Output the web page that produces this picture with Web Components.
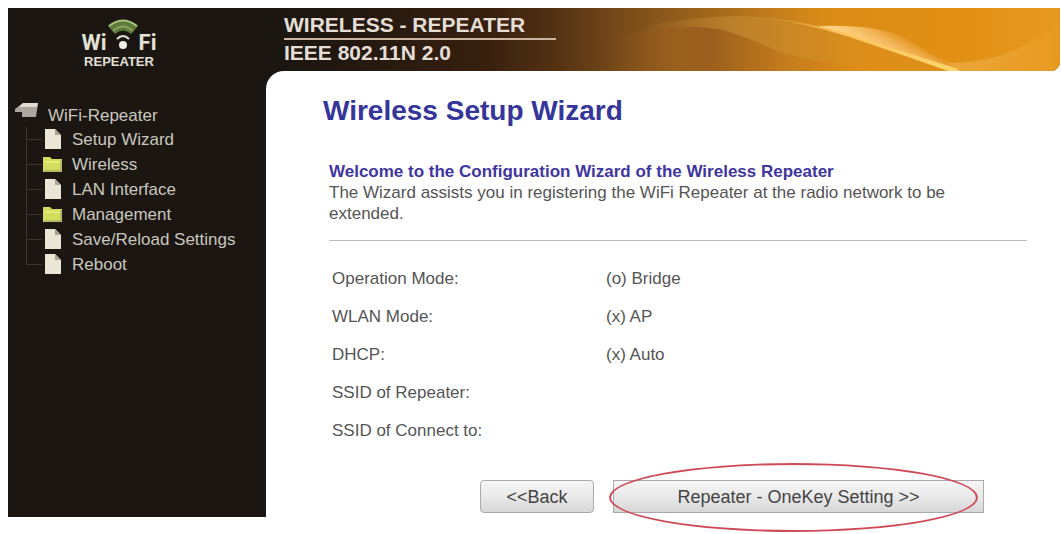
<!DOCTYPE html>
<html lang="en">
<head>
<meta charset="utf-8">
<title>Wireless Setup Wizard</title>
<style>
  body { box-sizing: border-box; min-height: 100vh; margin: 0; padding: 8px 2px 16px 8px; background: #fff; font-family: "Liberation Sans", Arial, sans-serif; font-size: 17px; color: #555; }
</style>
</head>
<body>
<repeater-app>
  <brand-logo slot="logo"></brand-logo>
  <top-banner slot="banner">
    <span slot="name">WIRELESS - REPEATER</span>
    <span slot="standard">IEEE 802.11N 2.0</span>
  </top-banner>
  <nav-tree slot="menu" label="WiFi-Repeater">
    <nav-item kind="page">Setup Wizard</nav-item>
    <nav-item kind="folder">Wireless</nav-item>
    <nav-item kind="page">LAN Interface</nav-item>
    <nav-item kind="folder">Management</nav-item>
    <nav-item kind="page">Save/Reload Settings</nav-item>
    <nav-item kind="page">Reboot</nav-item>
  </nav-tree>
  <setup-wizard>
    <span slot="title">Wireless Setup Wizard</span>
    <span slot="welcome">Welcome to the Configuration Wizard of the Wireless Repeater</span>
    <span slot="intro">The Wizard assists you in registering the WiFi Repeater at the radio network to be extended.</span>
    <status-table></status-table>
    <wizard-button slot="actions">&lt;&lt;Back</wizard-button>
    <wizard-button slot="actions" wide marked>Repeater - OneKey Setting &gt;&gt;</wizard-button>
  </setup-wizard>
</repeater-app>

<script>
const define = (name, html, setup) => {
  const template = document.createElement('template');
  template.innerHTML = html;
  customElements.define(name, class extends HTMLElement {
    constructor() {
      super();
      this.attachShadow({ mode: 'open' }).append(template.content.cloneNode(true));
    }
    connectedCallback() { if (setup) setup(this, this.shadowRoot); }
  });
};

define('repeater-app', `
  <style>
    :host { display: block; }
    .top { position: relative; display: grid; grid-template-columns: 258px 1fr; height: 63px; background: #1b1611; border-bottom-right-radius: 9px; overflow: hidden; }
    .body { display: grid; grid-template-columns: 258px 1fr; background: linear-gradient(90deg, #1b1611 258px, #fff 258px); }
    aside { padding-top: 33px; }
    .corner { background: linear-gradient(#1b1611, #1b1611) 0 0 / 18px 18px no-repeat; }
    main { background: #fff; border-top-left-radius: 18px; }
  </style>
  <header class="top"><slot name="logo"></slot><slot name="banner"></slot></header>
  <div class="body"><aside><slot name="menu"></slot></aside><div class="corner"><main><slot></slot></main></div></div>
`);

define('brand-logo', `
  <style>
    :host { display: flex; flex-direction: column; align-items: center; box-sizing: border-box; padding: 11px 36px 0 0; color: #e2e1d8; font-weight: bold; }
    .row { display: flex; align-items: flex-end; height: 36px; font-family: Roboto, sans-serif; font-size: 22px; line-height: 24px; }
    svg { display: block; margin-bottom: 4px; }
    .sub { font-size: 13px; line-height: 14px; }
  </style>
  <div class="row"><span>Wi</span>
    <svg width="32" height="32" viewBox="0 0 32 32" fill="none" aria-hidden="true">
      <path d="M1 7Q16-5 31 7L24 15Q16 8 8 15Z" fill="#5d7a38"/>
      <path d="M2 7Q16-4 30 7" stroke="#a9c37c" stroke-width="2"/>
      <path d="M6 12Q16 3 26 12" stroke="#8ba663" stroke-width="2"/>
      <path d="M10 20Q16 14 22 20" stroke="#e2e1d8" stroke-width="2"/>
      <circle cx="16" cy="26" r="4" fill="#f0f0e8"/>
    </svg>
    <span>Fi</span></div>
  <div class="sub">REPEATER</div>
`);

define('top-banner', `
  <style>
    :host { position: relative; display: block; color: #e4ded6; font-size: 21px; font-weight: bold; line-height: 26px; background: linear-gradient(90deg, #1b1611 0, #1f1710 8%, #38200f 28%, #553313 37%, #794b1a 45%, #99611b 54%, #c47d1c 64%, #d98b17 70%, #e39114 88%, #e69822 100%); }
    svg { position: absolute; inset: 0; width: 100%; height: 100%; }
    .text { position: relative; padding: 4px 0 0 18px; }
    .name { width: 272px; border-bottom: 2px solid #cbb4a1; white-space: nowrap; }
  </style>
  <svg viewBox="0 0 794 63" preserveAspectRatio="none" aria-hidden="true">
    <defs>
      <linearGradient id="haze" gradientUnits="userSpaceOnUse" x1="370" y1="0" x2="600" y2="0"><stop offset="0" stop-color="#a87428" stop-opacity="0"/><stop offset=".45" stop-color="#bd822b"/><stop offset="1" stop-color="#dd8f1a"/></linearGradient>
      <linearGradient id="low" gradientUnits="userSpaceOnUse" x1="340" y1="0" x2="600" y2="0"><stop offset="0" stop-color="#8c551c" stop-opacity="0"/><stop offset=".4" stop-color="#9b5f1d"/><stop offset=".7" stop-color="#c57d1c"/><stop offset="1" stop-color="#de8e17"/></linearGradient>
      <linearGradient id="glow" gradientUnits="userSpaceOnUse" x1="600" y1="36" x2="612" y2="14"><stop offset="0" stop-color="#ffd080"/><stop offset=".5" stop-color="#f3b65a"/><stop offset="1" stop-color="#e3921c"/></linearGradient>
      <linearGradient id="beam" gradientUnits="userSpaceOnUse" x1="490" y1="0" x2="694" y2="0"><stop offset="0" stop-color="#e0a040" stop-opacity="0"/><stop offset=".4" stop-color="#fcc35c"/><stop offset="1" stop-color="#ffd66a"/></linearGradient>
      <linearGradient id="edge" gradientUnits="userSpaceOnUse" x1="692" y1="0" x2="794" y2="0"><stop offset="0" stop-color="#eba638"/><stop offset="1" stop-color="#e8991f"/></linearGradient>
    </defs>
    <path d="M370 20Q460 1 524 13Q560 20 577 27L687 63H370Z" fill="url(#haze)"/>
    <path d="M340 32Q420 12 460 23Q490 32 510 43Q550 56 640 63H340Z" fill="url(#low)"/>
    <path d="M552 18Q610 16 638 29Q658 44 687 56L694 63Q640 48 577 26Z" fill="url(#glow)"/>
    <path d="M490 8Q530 12 577 24Q640 45 696 62L692 63H682Q620 41 577 27Q540 16 490 8Z" fill="url(#beam)"/>
    <path d="M682 55Q740 57 794 14V63H694Z" fill="url(#edge)"/>
  </svg>
  <div class="text"><div class="name"><slot name="name"></slot></div><div><slot name="standard"></slot></div></div>
`);

define('nav-tree', `
  <style>
    :host { display: block; color: #c9c6bf; }
    .root { display: flex; gap: 10px; padding-left: 7px; line-height: 23px; height: 23px; }
    .root svg { flex: none; margin-top: -3px; }
    .items { display: block; margin-left: 18px; }
  </style>
  <nav>
    <div class="root">
      <svg width="23" height="17" viewBox="0 0 23 17" aria-hidden="true"><path d="M0 8L8 2H23L21 16H7V11H0Z" fill="#aaa69e"/><path d="M8 2H23L22 6H4Z" fill="#dedbd3"/></svg>
      <span id="label"></span>
    </div>
    <div class="items"><slot></slot></div>
  </nav>
`, (el, root) => { root.getElementById('label').textContent = el.getAttribute('label'); });

define('nav-item', `
  <style>
    :host { display: block; }
    a { display: flex; align-items: center; height: 25px; line-height: 25px; color: inherit; text-decoration: none; white-space: nowrap; }
    .branch { width: 16px; height: 25px; flex: none; background: linear-gradient(#3a352e, #3a352e) 0 0 / 1px 100% no-repeat, linear-gradient(#3a352e, #3a352e) 0 50% / 100% 1px no-repeat; }
    :host(:last-of-type) .branch { background-size: 1px 50%, 100% 1px; }
    svg { flex: none; margin-right: 9px; }
    .folder, :host([kind="folder"]) .page { display: none; }
    :host([kind="folder"]) .folder { display: block; }
  </style>
  <a href="#"><span class="branch"></span>
    <svg class="page" width="21" height="21" viewBox="0 0 21 21" aria-hidden="true"><path d="M3 0H13L19 6V20H3Z" fill="#e9e6d6"/><path d="M13 0V6H19Z" fill="#aaa593"/></svg>
    <svg class="folder" width="21" height="21" viewBox="0 0 21 21" aria-hidden="true"><path d="M1 3H8L10 5H20V18H1Z" fill="#d3dc5c"/><path d="M2 7H19V9H2Z" fill="#e4ec7c"/><path d="M18 6H20V18H2V16H18Z" fill="#b7bc64"/></svg>
    <slot></slot></a>
`);

define('setup-wizard', `
  <style>
    :host { display: block; padding: 24px 33px 4px 57px; }
    h1 { margin: 0 0 34px; font-size: 28px; line-height: 32px; color: #35359a; }
    section { padding-left: 6px; }
    h2 { margin: 0; font-size: 17px; line-height: 21px; color: #41359f; }
    p { margin: 0; max-width: 680px; line-height: 21px; }
    hr { margin: 16px 0 19px; border: 0; height: 1px; background: #bbb; }
    .actions { display: flex; justify-content: flex-end; gap: 19px; margin-top: 30px; padding-right: 43px; }
  </style>
  <h1><slot name="title"></slot></h1>
  <section>
    <h2><slot name="welcome"></slot></h2>
    <p><slot name="intro"></slot></p>
    <hr>
    <slot></slot>
    <div class="actions"><slot name="actions"></slot></div>
  </section>
`);

define('status-table', `
  <style>
    :host { display: block; padding-left: 3px; }
    table { width: 100%; border-collapse: collapse; table-layout: fixed; }
    th, td { height: 38px; padding: 0; text-align: left; font-weight: normal; line-height: 20px; }
    th { width: 274px; }
  </style>
  <table>
    <tr><th scope="row">Operation Mode:</th><td>(o) Bridge</td></tr>
    <tr><th scope="row">WLAN Mode:</th><td>(x) AP</td></tr>
    <tr><th scope="row">DHCP:</th><td>(x) Auto</td></tr>
    <tr><th scope="row">SSID of Repeater:</th><td></td></tr>
    <tr><th scope="row">SSID of Connect to:</th><td></td></tr>
  </table>
`);

define('wizard-button', `
  <style>
    :host { position: relative; display: block; }
    button { display: block; min-width: 114px; height: 33px; padding: 0 16px; border: 1px solid #aaa; border-radius: 4px; background: linear-gradient(#f6f6f6, #e9e9e9 50%, #d7d7d7); color: #444; font: 18px/20px "Liberation Sans", Arial, sans-serif; }
    :host([wide]) button { min-width: 371px; border-radius: 0; }
    .mark { display: none; }
    :host([marked]) .mark { display: block; position: absolute; inset: -17px 6px -19px -4px; border: 2px solid #cf4a58; border-radius: 50%; pointer-events: none; }
  </style>
  <button type="button"><slot></slot></button><span class="mark"></span>
`);
</script>
</body>
</html>
